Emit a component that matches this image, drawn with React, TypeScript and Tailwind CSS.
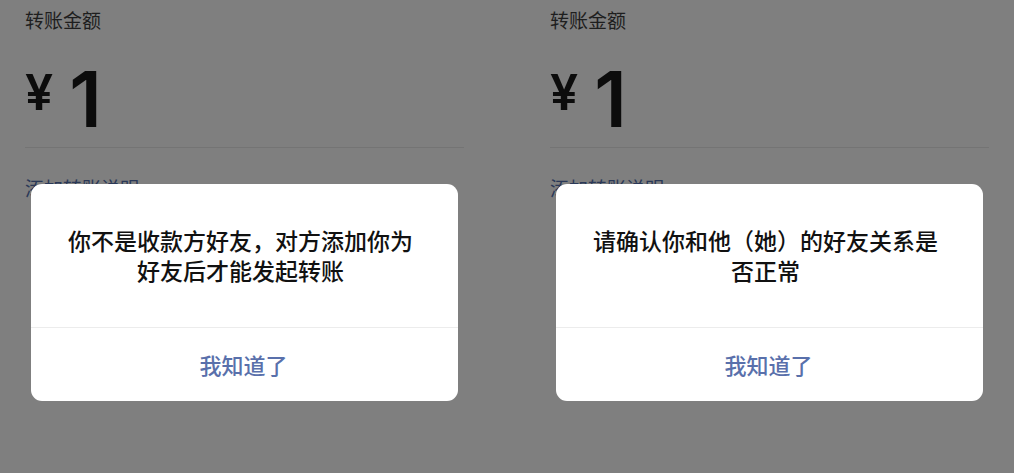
const cjk = 'font-["PingFang_SC","Noto_Sans_CJK_SC",sans-serif]'

type Panel = { message: string }

const panels: Panel[] = [
  { message: '你不是收款方好友，对方添加你为好友后才能发起转账' },
  { message: '请确认你和他（她）的好友关系是否正常' },
]

function TransferPanel({ message }: Panel) {
  return (
    <div className="relative w-[489px] h-full shrink-0">
      <div className="px-[25px] pt-[7px]">
        <p className={`${cjk} text-[19px] leading-[26px] text-[#1e1e1e]`}>转账金额</p>
        <div className="mt-[28px] flex items-start text-[#0c0c0c] font-['Inter',sans-serif] font-semibold">
          <span className="mt-[6px] text-[50px] leading-none">¥</span>
          <span className="ml-[16px] text-[77px] leading-none">1</span>
        </div>
        <div className="mt-[9px] h-px bg-[#747474]" />
        <p className={`${cjk} mt-[27px] text-[19px] leading-[26px] text-[#2a3857]`}>添加转账说明</p>
      </div>

      <div className="absolute left-[31px] top-[184px] w-[427px] rounded-[11px] bg-white overflow-hidden">
        <div className="pl-[36px] pr-[44px] pt-[41px] pb-[42px]">
          <p className={`${cjk} text-center text-[23px] leading-[30px] text-[#111111] font-[450]`}>
            {message}
          </p>
        </div>
        <div className="h-px bg-[#ececec]" />
        <button className={`${cjk} w-full h-[73px] pr-[2px] text-[22px] text-[#5970ab] font-[450]`}>
          我知道了
        </button>
      </div>
    </div>
  )
}

export default function App() {
  return (
    <div className="w-[1014px] h-[473px] bg-[#7f7f7f] flex gap-[36px] overflow-hidden">
      {panels.map((p, i) => (
        <TransferPanel key={i} message={p.message} />
      ))}
    </div>
  )
}
